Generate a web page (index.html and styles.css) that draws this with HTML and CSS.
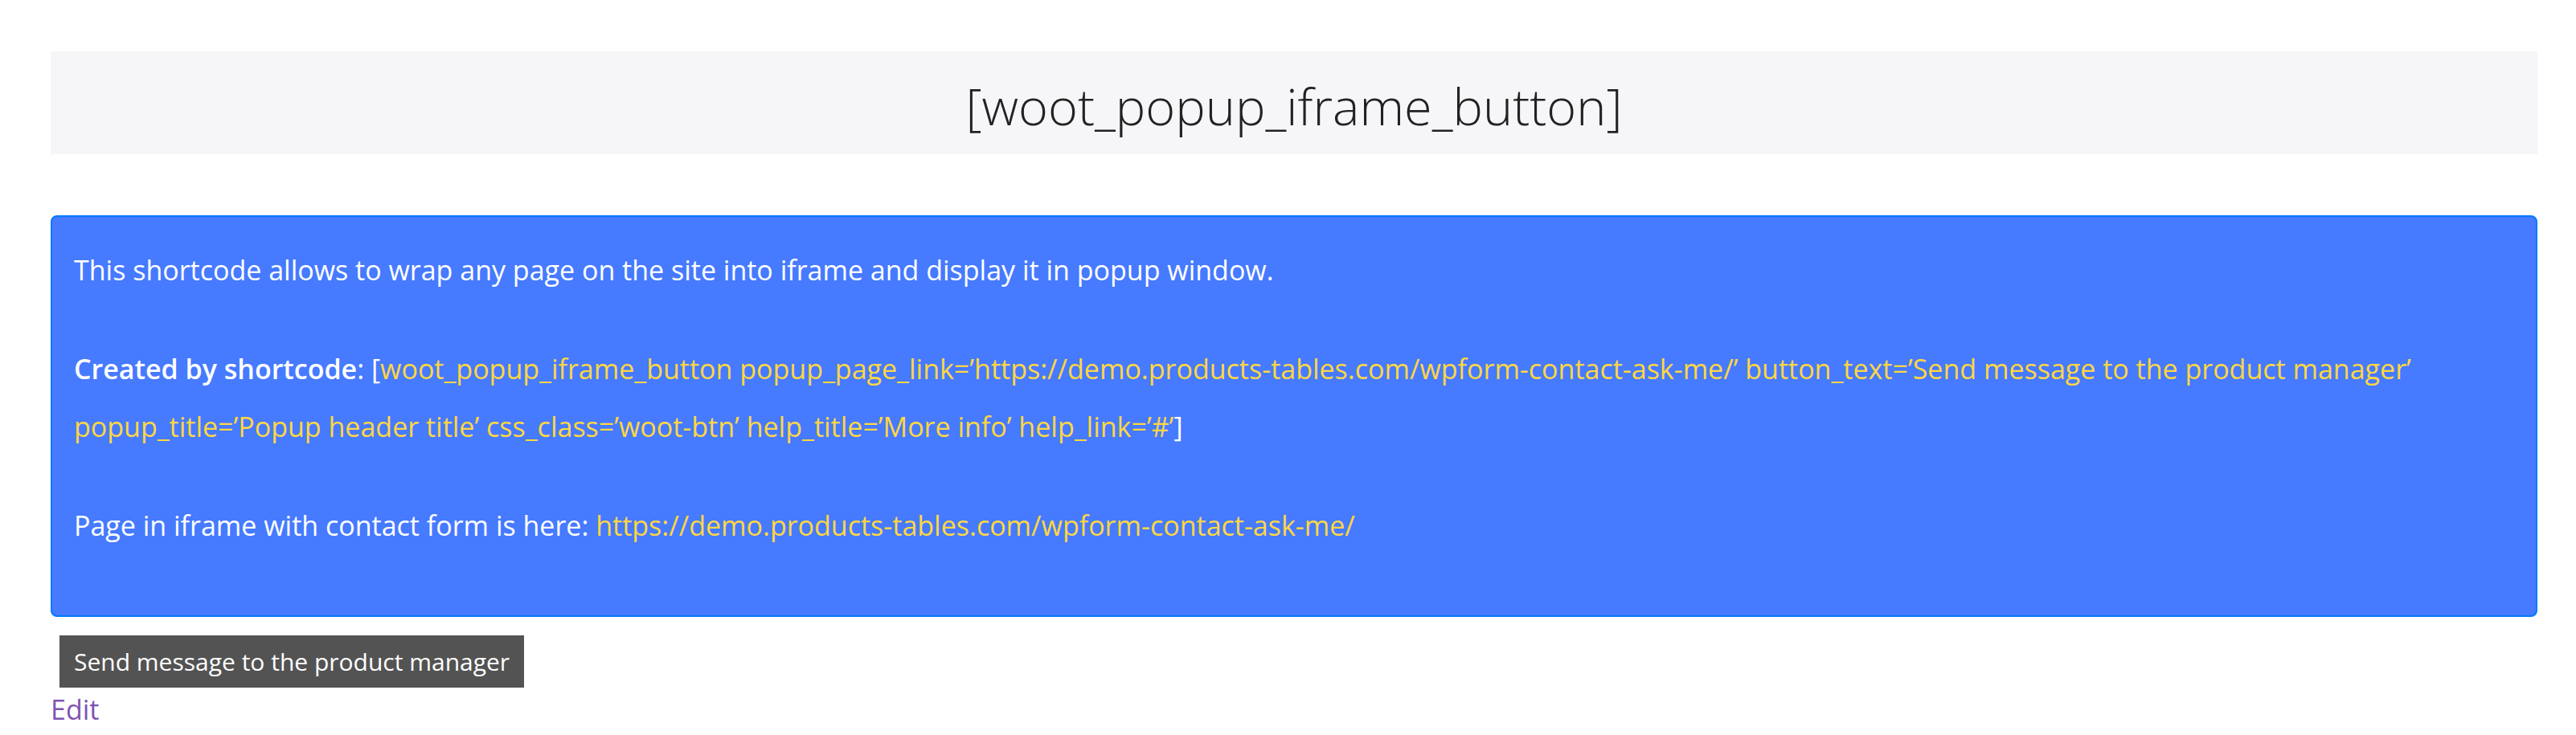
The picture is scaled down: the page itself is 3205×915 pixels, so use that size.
FILE: index.html
```html
<!DOCTYPE html>
<html lang="en">
<head>
<meta charset="utf-8">
<title>[woot_popup_iframe_button]</title>
<link rel="stylesheet" href="styles.css">
</head>
<body>
<main class="page">
  <h1 class="page-title">[woot_popup_iframe_button]</h1>
  <section class="notice">
    <p>This shortcode allows to wrap any page on the site into iframe and display it in popup window.</p>
    <p><strong>Created by shortcode</strong>: [<span class="code">woot_popup_iframe_button popup_page_link=’https://demo.products-tables.com/wpform-contact-ask-me/’ button_text=’Send message to the product manager’ popup_title=’Popup header title’ css_class=’woot-btn’ help_title=’More info’ help_link=’#’</span>]</p>
    <p>Page in iframe with contact form is here: <a class="notice-link" href="#">https://demo.products-tables.com/wpform-contact-ask-me/</a></p>
  </section>
  <div class="actions">
    <button class="woot-btn" type="button">Send message to the product manager</button>
    <a class="edit-link" href="#">Edit</a>
  </div>
</main>
</body>
</html>
```
FILE: styles.css
```css
* { box-sizing: border-box; }

body {
  margin: 0;
  background: #fff;
  color: #212529;
  font-family: "Segoe UI", "Open Sans", "Noto Sans", sans-serif;
  font-size: 34px;
}

.page { padding: 64px 48px 0 63px; }

.page-title {
  margin: 0 0 76px;
  padding: 28px 16px 20px;
  background: #f6f6f9;
  color: #222;
  font-size: 63px;
  font-weight: 300;
  line-height: 80px;
  text-align: center;
}

.notice {
  padding: 30px 27px 25px;
  border: 2px solid #007bff;
  border-radius: 8px;
  background: #467aff;
  color: #fff;
  line-height: 72px;
}

.notice p { margin: 0 0 51px; }
.notice strong { font-weight: 600; }
.code, .notice-link { color: #ffd740; }
.notice-link { text-decoration: none; }

.actions {
  display: flex;
  flex-direction: column;
  align-items: flex-start;
  padding-top: 23px;
}

.woot-btn {
  margin-left: 11px;
  padding: 10px 18px;
  border: 0;
  background: #535353;
  color: #fff;
  font-family: inherit;
  font-size: 30px;
  line-height: 45px;
}

.edit-link {
  color: #7f54b3;
  line-height: 54px;
  text-decoration: none;
}
```
